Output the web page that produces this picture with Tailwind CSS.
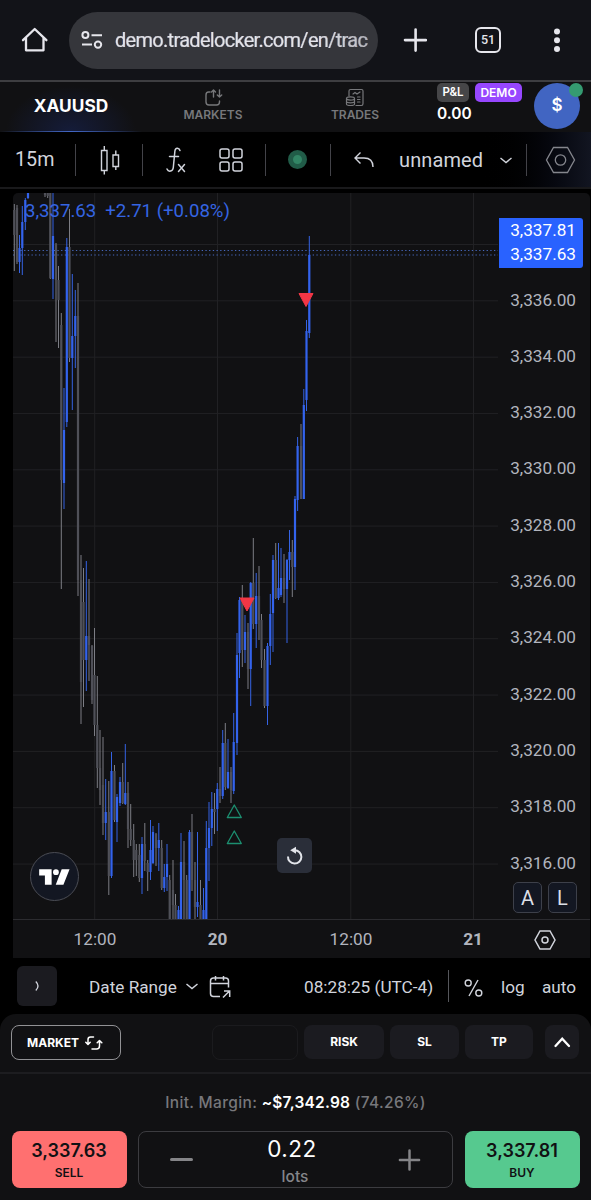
<!DOCTYPE html>
<html lang="en">

<head>
	<meta charset="utf-8">
	<title>XAUUSD - TradeLocker</title>
	<script src="https://cdn.jsdelivr.net/npm/@tailwindcss/browser@4"></script>
</head>

<body class="bg-black">
<div class="w-[591px] h-[1200px] overflow-hidden bg-black font-[Roboto,sans-serif] text-[#d1d4dc] whitespace-nowrap">

	<!-- browser bar -->
	<header class="flex items-center h-[80px] bg-[#121318] text-[#e6e6ec]">
		<svg class="ml-5 w-[30px] h-[30px]" viewBox="0 0 30 30" fill="none" stroke="currentColor" stroke-width="2.3" stroke-linejoin="round" stroke-linecap="round">
			<path d="M3 15.2 14.7 4 26.4 15.2M6 13v12.3h17.5V13" />
		</svg>
		<div class="ml-[19px] flex items-center w-[309px] h-[57px] rounded-full bg-[#35363b]">
			<svg class="ml-3 w-[22px] h-5" viewBox="0 0 22 20" fill="none" stroke="currentColor" stroke-width="2">
				<circle cx="4.4" cy="5" r="3" /><path d="M10.5 5.2H21M1 14.6h10" /><circle cx="17" cy="14.6" r="3.2" />
			</svg>
			<span class="ml-3 w-[253px] text-[20px] tracking-[-0.7px] bg-linear-to-r from-[#e6e6ec] from-80% to-[#b4b4ba] bg-clip-text text-transparent [-webkit-text-stroke:0.2px_#dcdce2]">demo.tradelocker.com/en/trac</span>
		</div>
		<svg class="ml-[25px] w-6 h-6" viewBox="0 0 24 24" stroke="currentColor" stroke-width="2.6" stroke-linecap="round"><path d="M12.6 1.6v21M2 12.1h21" /></svg>
		<div class="ml-[48px] flex items-center justify-center w-[26px] h-[26px] rounded-[6px] border-[2.5px] border-[#e6e6ec] text-[12.5px] font-medium">51</div>
		<svg class="ml-[52px] w-[8px] h-[26px]" viewBox="0 0 8 26" fill="currentColor"><circle cx="4" cy="4.6" r="3" /><circle cx="4" cy="13.2" r="3" /><circle cx="4" cy="22" r="3" /></svg>
	</header>

	<!-- tabs -->
	<nav class="flex h-[52px] border-t-2 border-[#3e3e41] bg-[#111113] font-[Inter,sans-serif] font-semibold">
		<div class="relative flex items-center justify-center w-[142px] bg-[radial-gradient(ellipse_at_bottom,#151c3a_0%,#111113_65%)] text-white text-[17.3px] font-bold">
			<span class="-mt-[3px]">XAUUSD</span>
			<div class="absolute bottom-0 left-0 w-full h-px bg-linear-to-r from-transparent via-[#4267c5] to-transparent"></div>
		</div>
		<div class="flex flex-col items-center w-[142px] pt-[6px] text-[12px] text-[#77787b]">
			<svg class="w-5 h-[19px]" viewBox="0 0 20 19" fill="none" stroke="currentColor" stroke-width="1.4" stroke-linecap="round" stroke-linejoin="round">
				<path d="M6 4H4.6Q2 4 2 7v7q0 3 3 3h7.500q3 0 3-3v-1M9.5 9V2M7.500 4l2-2 2 2M15.500 2v7M13.300 7l2.200 2 2.200-2" transform="translate(1)" />
			</svg>
			<span class="leading-[16px]">MARKETS</span>
		</div>
		<div class="flex flex-col items-center w-[142px] pt-[6px] text-[12px] text-[#77787b]">
			<svg class="w-5 h-[19px]" viewBox="0 0 20 19" fill="none" stroke="currentColor" stroke-width="1.2" stroke-linecap="round">
				<path d="M4 8V3q0-1.500 1.500-1.500h11q1.500 0 1.500 1.500v12.500q0 2-1.500 2H11M8 6l2-1.500 2 1.500 3-2M12.500 9H15M12.500 11.500H15M12.500 14H15" />
				<ellipse cx="5.500" cy="10.500" rx="4" ry="1.600" />
				<path d="M1.500 10.500v5.500c0 2 8 2 8 0v-5.500M1.500 13.300c0 2 8 2 8 0" />
			</svg>
			<span class="leading-[16px]">TRADES</span>
		</div>
		<div class="ml-[11px] pt-px">
			<div class="flex gap-[6px] text-[11.5px] text-white">
				<span class="flex items-center justify-center w-8 h-[19px] rounded-[5px] bg-[#464648]">P&amp;L</span>
				<span class="flex items-center justify-center w-[47px] h-[19px] rounded-[5px] bg-[#9747ff] text-[12px]">DEMO</span>
			</div>
			<div class="text-[15.5px] leading-[23px] text-white">0.00</div>
		</div>
		<div class="relative ml-[12px] mt-px flex items-center justify-center w-[46px] h-[46px] rounded-full bg-[#4165c2] text-white text-[17px]">
			$<span class="absolute right-[-3px] top-0 w-[14px] h-[14px] rounded-full bg-[#359b71]"></span>
		</div>
	</nav>

	<!-- chart toolbar -->
	<div class="flex items-center h-[55px] bg-linear-to-r from-black from-80% to-[#121521] text-[20px]">
		<span class="ml-[15px] w-[60px] text-[19.7px]">15m</span>
		<i class="w-px h-8 bg-[#434349]"></i>
		<svg class="ml-[23px] w-6 h-8" viewBox="0 0 24 32" fill="none" stroke="currentColor" stroke-width="1.4"><path d="M2.500 6.500h5.500v20H2.500zM5.300 2v4.500M5.300 26.500v4M14 11h5.500v11.500H14zM16.800 6.500V11M16.800 22.500V26" /></svg>
		<i class="ml-[19px] w-px h-8 bg-[#434349]"></i>
		<svg class="ml-[22px] w-6 h-7" viewBox="0 0 24 28" fill="none" stroke="currentColor" stroke-width="1.5" stroke-linecap="round"><path d="M15 4.500C14 1.500 10.300 1.500 9.900 5L8.300 21.500C8 25.500 3.500 26.500 2 23M4.500 10.500h9M13.500 18.500l6 7M19.500 18.500l-6 7" /></svg>
		<svg class="ml-[30px] w-6 h-6" viewBox="0 0 24 24" fill="none" stroke="currentColor" stroke-width="1.5"><rect x="1" y="1" width="9" height="9" rx="2" /><rect x="14" y="1" width="9" height="9" rx="2" /><rect x="1" y="14" width="9" height="9" rx="2" /><rect x="14" y="14" width="9" height="9" rx="2" /></svg>
		<i class="ml-[22px] w-px h-8 bg-[#434349]"></i>
		<span class="ml-[22px] w-[19px] h-[19px] rounded-full border-[5px] border-[#215c48] bg-[#328565]"></span>
		<i class="ml-[23px] w-px h-8 bg-[#434349]"></i>
		<svg class="ml-[23px] w-5 h-5" viewBox="0 0 20 20" fill="none" stroke="currentColor" stroke-width="1.4"><path d="M6.500 2.500 1 8l5.500 5.500M1 8h9q9 0 9 9" /></svg>
		<span class="ml-[25px] w-[84px] tracking-[0.1px]">unnamed</span>
		<svg class="ml-[17px] w-3 h-3" viewBox="0 0 12 12" fill="none" stroke="currentColor" stroke-width="1.4"><path d="M.5 4 6 8.500 11.500 4" /></svg>
		<i class="ml-[14px] w-px h-8 bg-[#434349]"></i>
		<svg class="ml-[18px] w-[31px] h-[28px] text-[#85868d]" viewBox="0 0 31 28" fill="none" stroke="currentColor" stroke-width="1.3"><path d="M8.500 1.500h14L29.500 14l-7 12.500h-14L1.500 14z" /><circle cx="15.500" cy="14" r="5.200" /></svg>
	</div>
	<div class="h-[6px] border-t-2 border-[#19191b]"></div>

	<!-- chart -->
	<main class="relative ml-[13px] w-[577px] h-[765px] rounded-t-[5px] bg-[#111113] text-[17.2px] text-[#b2b5be]">
		<div class="flex h-[727px] border-b border-[#2c2c30]">
			<svg id="chart" class="w-[485px] h-[726px]" viewBox="13 193 485 726"></svg>
			<div class="pt-[78.5px] w-[92px] pr-[14px] text-right" id="prices"></div>
		</div>
		<div class="flex items-center h-[39px] pt-px">
			<span class="w-[164px] text-center">12:00</span>
			<span class="w-[81px] text-center font-bold">20</span>
			<span class="w-[186px] text-center">12:00</span>
			<span class="w-[58px] text-center font-bold">21</span>
			<svg class="ml-[32px] w-[22px] h-5 text-[#d1d4dc]" viewBox="0 0 22 20" fill="none" stroke="currentColor" stroke-width="1.5"><path d="M6 1h10l5 9-5 9H6l-5-9z" /><circle cx="11" cy="10" r="3" /></svg>
		</div>

		<div class="absolute left-3 top-[6px] flex gap-[9px] text-[18.6px] leading-6 text-[#3565e2]"><span>3,337.63</span><span>+2.71 (+0.08%)</span></div>
		<div class="absolute left-[486px] top-[25px] w-[84px] h-[50px] pr-[7px] rounded-r-[3px] bg-[#2962ff] text-right leading-[24px] text-white"><div>3,337.81</div><div>3,337.63</div></div>
		<div class="absolute left-[17px] top-[659px] w-[49px] h-[49px] rounded-full border-[1.5px] border-[#4a4c54] bg-[#131722]">
			<svg class="w-full h-full" viewBox="0 0 49 49" fill="#fff"><path d="M8.500 17H21.500v16h-7V23.500H8.500zM32 17h8.200L33.800 33h-8z" /><circle cx="26" cy="20" r="3" /></svg>
		</div>
		<button class="absolute left-[264px] top-[645px] w-[35px] h-[35px] rounded-[5px] bg-[#2a2e39]">
			<svg class="w-full h-full" viewBox="0 0 35 35"><path d="M11 18.500A6.700 6.700 0 1 0 17.700 12.200" fill="none" stroke="#e2e4ea" stroke-width="2" /><path d="M19 8.700v7L13.200 12.200z" fill="#e2e4ea" /></svg>
		</button>
		<div class="absolute left-[500px] top-[689px] flex gap-[6px] text-[20px] text-[#dcdfe6]">
			<span class="flex items-center justify-center w-[29px] h-[31px] rounded-[5px] border border-[#3d404a] bg-[#131722]">A</span>
			<span class="flex items-center justify-center w-[29px] h-[31px] rounded-[5px] border border-[#3d404a] bg-[#131722]">L</span>
		</div>
	</main>

	<!-- range toolbar -->
	<div class="flex items-center h-14 text-[17.2px]">
		<button class="ml-[17px] w-10 h-10 mb-px rounded-md bg-[#1b1b20]"><svg class="w-full h-full" viewBox="0 0 40 40" fill="none" stroke="#d1d4dc" stroke-width="1.3"><path d="M18.800 15.500q4.400 4.500 0 9" /></svg></button>
		<span class="ml-[32px] mt-[3px] w-[89px]">Date Range</span>
		<svg class="ml-[8px] w-3 h-3" viewBox="0 0 12 12" fill="none" stroke="currentColor" stroke-width="1.5"><path d="M.5 4 6 8.500 11.500 4" /></svg>
		<svg class="ml-[11px] mt-px w-[22px] h-6" viewBox="0 0 22 24" fill="none" stroke="currentColor" stroke-width="1.500"><path d="M11 21.500H4.500q-3 0-3-3V6q0-3 3-3h12q3 0 3 3v6.500M1.500 8.500h18M6.500 1v4.500M14.500 1v4.500M14 22.500l6.500-6.500M15 16h5.700v6" /></svg>
		<span class="ml-[73px] mt-[3px] w-[131px]">08:28:25 (UTC-4)</span>
		<i class="ml-[13px] w-px h-8 bg-[#56575c]"></i>
		<svg class="ml-[15px] mt-[3px] w-[19px] h-5" viewBox="0 0 19 20" fill="none" stroke="currentColor" stroke-width="1.400"><circle cx="4.200" cy="5" r="3" /><circle cx="14.800" cy="15" r="3" /><path d="M14 2 5 18" /></svg>
		<span class="ml-[18px] mt-[3px] w-6">log</span>
		<span class="ml-[17px] mt-[3px]">auto</span>
	</div>

	<!-- order panel -->
	<section class="h-[186px] rounded-t-[16px] bg-[#111113] font-[Inter,sans-serif]">
		<div class="flex pt-[11px] h-[60px] border-b-2 border-[#1d1d20] text-[12px] font-bold text-white">
			<button class="ml-[11px] flex items-center w-[110px] h-[35px] pl-[15px] rounded-[8px] border border-[#929295]">MARKET
				<svg class="ml-[6px] w-[18px] h-4" viewBox="0 0 18 16" fill="none" stroke="currentColor" stroke-width="1.500" stroke-linecap="round" stroke-linejoin="round"><path d="M8.500 2H5.500Q3 2 3 4.500V9M.8 7.200 3 9.500l2.200-2.300M7 14h4.500Q14.500 14 14.500 11V6M12.200 7.800l2.300-2.300 2.300 2.300" /></svg>
			</button>
			<span class="ml-[91px] w-[86px] h-[35px] rounded-[8px] border border-[#1b1b1e]"></span>
			<button class="ml-[6px] w-[80px] h-[34px] rounded-[8px] bg-[#1b1b20]">RISK</button>
			<button class="ml-[6px] w-[69px] h-[34px] rounded-[8px] bg-[#1b1b20]">SL</button>
			<button class="ml-[6px] w-[68px] h-[34px] rounded-[8px] bg-[#1b1b20]">TP</button>
			<button class="ml-[12px] w-[34px] h-[34px] rounded-[8px] bg-[#1b1b20]"><svg class="w-full h-full" viewBox="0 0 34 34" fill="none" stroke="#fff" stroke-width="2.300" stroke-linecap="round"><path d="M10.500 21 17.200 13.800 24 21" /></svg></button>
		</div>
		<div class="flex items-center justify-center h-[57px] text-[15.500px] font-medium tracking-[0.34px] text-[#77777b]"><span>Init. Margin: <b class="font-semibold text-white tracking-[0.2px]">~$7,342.98</b> (74.26%)</span></div>
		<div class="flex h-[57px] text-[#111113]">
			<button class="ml-[11.500px] flex flex-col items-center pt-[9px] w-[115px] h-[57px] rounded-[8px] bg-[#ff7070] font-semibold"><span class="text-[18px] leading-[22px]">3,337.63</span><span class="text-[12px] leading-[22px]">SELL</span></button>
			<div class="ml-[11.500px] flex items-center w-[315px] h-[57px] rounded-[8px] border border-[#3c3c40] text-[#85858a]">
				<i class="ml-[31px] w-[23px] h-[3px] rounded-full bg-[#858588]"></i>
				<div class="ml-[56px] w-[86px] text-center"><div class="text-[22.500px] tracking-[0.500px] leading-[33px] text-white">0.22</div><div class="ml-[6px] text-[15.500px] leading-[23px] font-medium">lots</div></div>
				<svg class="ml-[63px] w-[23px] h-[24px]" viewBox="0 0 24 24" stroke="#858588" stroke-width="2.600" stroke-linecap="round"><path d="M12 2v20M2 12h20" /></svg>
			</div>
			<button class="ml-[11.500px] flex flex-col items-center pt-[9px] w-[115px] h-[57px] rounded-[8px] bg-[#56c98f] font-semibold"><span class="text-[18px] leading-[22px]">3,337.81</span><span class="text-[12px] leading-[22px]">BUY</span></button>
		</div>
	</section>
</div>

<script>
	let chart = document.getElementById("chart");
	let prices = document.getElementById("prices");

	// x, high, body top, body bottom, low, 1 = up
	let candles = [
		[14.3,204,210,235,271,0],[17,205,208,262,264,0],[19.5,235,248,262,273,1],[22.3,206,222,248,275,1],[25.3,198,200,222,230,1],[28,193,193,198,199,1],
		[45,193,193,195,197,0],[47.7,193,193,196,198,0],[50.3,193,193,278,279,0],[53,193,236,279,299,1],[56,243,245,280,342,0],[58.5,266,280,300,348,0],
		[61.3,313,325,480,589,0],[64,388,430,483,509,1],[66.8,238,247,422,427,1],[69.5,209,247,358,362,0],[72.3,274,336,358,410,1],[75.3,290,316,336,368,1],
		[78,283,316,580,596,0],[81,555,580,682,724,0],[83.5,568,602,660,707,0],[86.3,561,636,660,691,1],[89,579,636,645,681,0],[92,645,646,700,704,0],
		[94.5,628,675,725,736,0],[97.3,676,725,768,788,0],[100,730,768,790,805,0],[103,737,785,823,835,0],[105.7,779,812,823,840,1],[108.8,781,812,876,895,0],
		[111.5,752,771,876,878,1],[114.5,765,771,820,822,0],[117,794,797,822,842,1],[120,777,782,803,806,1],[122.7,763,782,803,804,0],[125.3,744,793,804,805,1],
		[128,782,793,829,848,0],[130.7,804,829,840,846,0],[133.7,824,840,860,877,0],[136.3,844,850,860,876,0],[139.3,844,855,878,882,0],[142,837,844,878,894,1],
		[144.8,823,844,861,871,0],[147.7,860,863,872,891,0],[150.5,820,850,872,880,1],[153,826,832,863,864,1],[156,833,834,848,866,0],[158.8,823,840,848,871,1],
		[161.7,840,848,888,890,0],[164.3,864,877,888,892,1],[167,844,864,877,891,1],[169.7,875,880,919,919,0],[173,860,890,905,919,0],[175.5,894,905,919,919,0],
		[178.5,906,910,919,919,1],[181,833,862,919,919,1],[184,841,862,880,919,0],[186.7,875,880,919,919,0],[189.5,830,832,919,919,1],[192,814,832,880,891,0],
		[195,862,880,907,919,0],[197.5,832,902,907,917,1],[200.5,880,905,919,919,0],[203.5,888,910,919,919,1],[206.3,821,848,919,919,1],[209,802,828,848,881,1],
		[211.8,792,809,828,846,1],[214.5,793,809,812,834,0],[217.3,783,789,809,831,1],[220,767,789,796,803,0],[222.7,730,743,796,799,1],[225.3,723,743,787,790,0],
		[228,739,772,788,789,1],[231,767,772,790,803,0],[233.7,713,742,791,794,1],[237,633,655,743,755,1],[239.5,597,600,653,678,1],[242.3,585,600,650,667,0],
		[245,615,632,650,663,1],[248,623,632,669,689,0],[250.7,582,583,669,706,1],[253.3,538,583,624,629,0],[256.2,573,596,624,648,1],[259,566,596,620,640,0],
		[261.5,614,620,660,668,0],[264.5,649,660,706,708,0],[267.5,643,646,706,725,1],[270.3,594,614,646,665,1],[273,555,560,613,652,1],[275.7,543,560,598,599,0],
		[278.5,543,588,598,600,1],[281,548,578,595,597,1],[284,554,578,589,603,0],[287,559,560,589,643,1],[289.5,530,552,560,580,1],[292.3,540,552,567,597,0],
		[295,496,499,567,590,1],[297.6,437,446,500,511,1],[301,424,446,499,499,0],[303.8,389,405,499,499,1],[306.5,320,331,400,411,1],[309.3,236,255,333,338,1]
	];

	function rect(x, y, w, h, fill) {
		return `<rect x="${x}" y="${y}" width="${w}" height="${h}" fill="${fill}"/>`;
	}

	let out = "";
	for (let i = 0; i < 12; i++) out += rect(13, 244 + i * 56.32, 485, 1, "#212124");
	for (let x of [94.2, 217, 350.3, 473]) out += rect(x, 193, 1, 726, "#212124");
	out += '<path d="M13 250.500H498M13 255H498" stroke="#4668bd" stroke-width="1.200" stroke-dasharray="1.300 2.400"/>';
	for (let [x, high, top, bottom, low, up] of candles) {
		out += rect(x - 0.5, high, 1, low - high, up ? "#3563e4" : "#7c7d84");
		out += rect(x - 1.1, top, 2.2, bottom - top, up ? "#3363ec" : "#4f5058");
	}
	// trade markers
	for (let [x, y] of [[306, 293.5], [247, 598]])
		out += `<path d="M${x - 7} ${y}h14l-7 13z" fill="#f23645" stroke="#f23645" stroke-linejoin="round"/>`;
	for (let y of [805, 831])
		out += `<path d="M234.300 ${y}l7 12.500h-14z" fill="none" stroke="#1c8f70" stroke-width="1.300" stroke-linejoin="round"/>`;
	chart.innerHTML = out;

	for (let p = 3336; p >= 3316; p -= 2) {
		let label = document.createElement("div");
		label.className = "h-[56.32px] leading-[56.32px]";
		label.textContent = p.toLocaleString("en-US") + ".00";
		prices.appendChild(label);
	}
</script>
</body>

</html>
